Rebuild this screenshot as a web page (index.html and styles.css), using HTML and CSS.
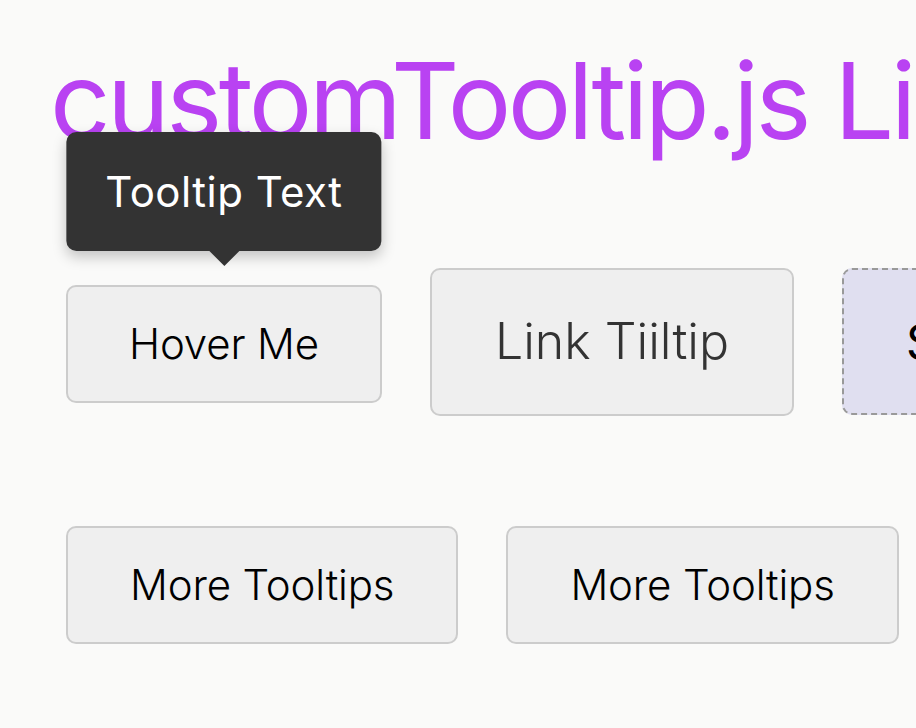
FILE: index.html
```html
<!DOCTYPE html>
<html lang="en">
<head>
    <meta charset="UTF-8">
    <meta name="viewport" content="width=device-width, initial-scale=1.0">
    <title>customTooltip.js Library</title>
    <link rel="stylesheet" href="styles.css">
</head>
<body>
    <div class="page">
        <h1 class="title">customTooltip.js Library Demo</h1>

        <div class="row row-top">
            <div class="tip-wrap">
                <button class="btn btn-hover">Hover Me</button>
                <div class="tooltip">Tooltip Text</div>
            </div>
            <a href="#" class="btn btn-link">Link Tiiltip</a>
            <span class="btn btn-span">Span Tooltip</span>
        </div>

        <div class="row row-more">
            <button class="btn btn-more">More Tooltips</button>
            <button class="btn btn-more">More Tooltips</button>
        </div>
    </div>
</body>
</html>
```

FILE: styles.css
```css
body {
    margin: 0;
    background-color: #fafaf9;
    font-family: Inter, "Noto Sans", sans-serif;
    overflow: hidden;
}
.page {
    padding: 0 0 0 50px;
}
.title {
    margin: 48px 0 0 0;
    font-size: 106px;
    font-weight: 400;
    line-height: 1;
    color: #b942f2;
    white-space: nowrap;
    letter-spacing: -3.5px;
}
.row {
    display: flex;
    align-items: baseline;
    gap: 48px;
    padding-left: 16px;
    white-space: nowrap;
}
.row-top {
    margin-top: 114px;
}
.row-more {
    margin-top: 110px;
}
.btn {
    display: inline-block;
    font-family: Inter, "Noto Sans", sans-serif;
    font-size: 42px;
    font-weight: 300;
    line-height: normal;
    letter-spacing: -0.15px;
    color: #000;
    background-color: #efefef;
    border: 2px solid #ccc;
    border-radius: 10px;
    padding: 31px 63px 32px;
    text-decoration: none;
    cursor: pointer;
    flex-shrink: 0;
}
.btn-hover {
    padding-left: 61px;
    padding-right: 61px;
}
.btn-more {
    padding-left: 62px;
    padding-right: 62px;
}
.btn-link {
    font-size: 50px;
    letter-spacing: 0;
    color: #333;
    padding: 41px 63px 43px;
}
.btn-span {
    font-size: 48px;
    font-weight: 400;
    background-color: #e0dff0;
    border: 2px dashed #999;
    padding: 42px 62px;
}
.tip-wrap {
    position: relative;
    display: inline-block;
}
.tooltip {
    position: absolute;
    left: 50%;
    bottom: calc(100% + 34px);
    transform: translateX(-50%);
    background-color: #333;
    color: #fff;
    font-size: 42px;
    font-weight: 400;
    line-height: normal;
    letter-spacing: 0.5px;
    padding: 34px 39px;
    border-radius: 10px;
    white-space: nowrap;
    box-shadow: 0 6px 14px rgba(0, 0, 0, 0.22);
}
.tooltip::after {
    content: "";
    position: absolute;
    top: 100%;
    left: 50%;
    margin-left: -15px;
    border-width: 15px 15px 0 15px;
    border-style: solid;
    border-color: #333 transparent transparent transparent;
}
```
